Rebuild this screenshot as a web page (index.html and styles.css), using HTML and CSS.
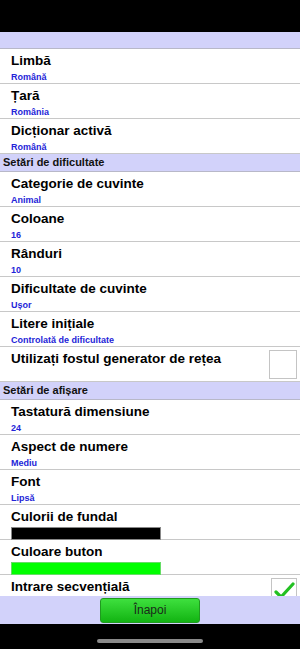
FILE: index.html
```html
<!DOCTYPE html>
<html lang="ro">
<head>
    <meta charset="UTF-8">
    <link rel="stylesheet" href="styles.css">
</head>
<body>
    <div class="screen">
        <div class="status-bar"></div>
        <div class="top-bar"></div>

        <div class="settings">
            <div class="row">
                <div class="row-text">
                    <div class="row-title">Limbă</div>
                    <div class="row-value">Română</div>
                </div>
            </div>
            <div class="row">
                <div class="row-text">
                    <div class="row-title">Țară</div>
                    <div class="row-value">România</div>
                </div>
            </div>
            <div class="row">
                <div class="row-text">
                    <div class="row-title">Dicționar activă</div>
                    <div class="row-value">Română</div>
                </div>
            </div>

            <div class="section-header">Setări de dificultate</div>

            <div class="row">
                <div class="row-text">
                    <div class="row-title">Categorie de cuvinte</div>
                    <div class="row-value">Animal</div>
                </div>
            </div>
            <div class="row">
                <div class="row-text">
                    <div class="row-title">Coloane</div>
                    <div class="row-value">16</div>
                </div>
            </div>
            <div class="row">
                <div class="row-text">
                    <div class="row-title">Rânduri</div>
                    <div class="row-value">10</div>
                </div>
            </div>
            <div class="row">
                <div class="row-text">
                    <div class="row-title">Dificultate de cuvinte</div>
                    <div class="row-value">Ușor</div>
                </div>
            </div>
            <div class="row">
                <div class="row-text">
                    <div class="row-title">Litere inițiale</div>
                    <div class="row-value">Controlată de dificultate</div>
                </div>
            </div>
            <div class="row">
                <div class="row-text">
                    <div class="row-title">Utilizați fostul generator de rețea</div>
                </div>
                <div class="checkbox"></div>
            </div>

            <div class="section-header">Setări de afișare</div>

            <div class="row">
                <div class="row-text">
                    <div class="row-title">Tastatură dimensiune</div>
                    <div class="row-value">24</div>
                </div>
            </div>
            <div class="row">
                <div class="row-text">
                    <div class="row-title">Aspect de numere</div>
                    <div class="row-value">Mediu</div>
                </div>
            </div>
            <div class="row">
                <div class="row-text">
                    <div class="row-title">Font</div>
                    <div class="row-value">Lipsă</div>
                </div>
            </div>
            <div class="row">
                <div class="row-text">
                    <div class="row-title">Culorii de fundal</div>
                    <div class="color-swatch swatch-black"></div>
                </div>
            </div>
            <div class="row">
                <div class="row-text">
                    <div class="row-title">Culoare buton</div>
                    <div class="color-swatch swatch-green"></div>
                </div>
            </div>
            <div class="row">
                <div class="row-text">
                    <div class="row-title">Intrare secvențială</div>
                </div>
                <div class="checkbox checked">
                    <svg width="24" height="24" viewBox="0 0 24 24">
                        <path d="M4 12 L9 17 L21 4" fill="none" stroke="#22c022" stroke-width="3.2" stroke-linecap="round" stroke-linejoin="round"/>
                    </svg>
                </div>
            </div>
        </div>

        <div class="bottom-bar">
            <button class="back-button">Înapoi</button>
        </div>
        <div class="home-area">
            <div class="home-indicator"></div>
        </div>
    </div>
</body>
</html>
```

FILE: styles.css
```css
body {
    margin: 0;
    font-family: 'Liberation Sans', Arial, sans-serif;
    background: #000;
}

.screen {
    width: 300px;
    height: 649px;
    display: flex;
    flex-direction: column;
    overflow: hidden;
}

.status-bar {
    height: 32px;
    background: #000;
    flex-shrink: 0;
}

.top-bar {
    height: 16px;
    background: #d2d2fa;
    border-bottom: 1px solid #b8b8c8;
    flex-shrink: 0;
}

.settings {
    flex: 1;
    overflow: hidden;
    background: #fff;
}

.row {
    height: 34px;
    border-bottom: 1px solid #c8c8c8;
    display: flex;
    justify-content: space-between;
    padding: 0 3px 0 11px;
    background: #fff;
}

.row-text {
    padding-top: 3px;
}

.row-title {
    font-size: 13.5px;
    font-weight: bold;
    line-height: 17px;
    color: #000;
}

.row-value {
    font-size: 9px;
    font-weight: bold;
    line-height: 12px;
    margin-top: 2px;
    color: #2424d8;
}

.color-swatch {
    width: 148px;
    height: 11px;
    margin-top: 2px;
    border: 1px solid #888;
}

.swatch-black {
    background: #000;
}

.swatch-green {
    background: #00ff00;
    border-color: #66dd66;
}

.checkbox {
    width: 26px;
    height: 27px;
    margin-top: 3px;
    border: 1px solid #c4c4c4;
    background: #fff;
    display: flex;
    align-items: center;
    justify-content: center;
}

.checkbox.checked {
    align-items: flex-start;
    padding-top: 1px;
    box-sizing: border-box;
    height: 28px;
}

.section-header {
    height: 17px;
    line-height: 17px;
    border-bottom: 1px solid #b8b8c8;
    background: #d2d2fa;
    padding-left: 3px;
    font-size: 11px;
    font-weight: bold;
    color: #111;
}

.bottom-bar {
    height: 28px;
    background: #d2d2fa;
    display: flex;
    justify-content: center;
    align-items: center;
    flex-shrink: 0;
}

.back-button {
    width: 100px;
    height: 25px;
    border: 1px solid #1f9a1f;
    border-radius: 3px;
    background: linear-gradient(#3ee03e, #12b412);
    font-family: 'Liberation Sans', Arial, sans-serif;
    font-size: 12px;
    color: #1a2a1a;
    padding: 0;
}

.home-area {
    height: 25px;
    background: #000;
    display: flex;
    justify-content: center;
    padding-top: 15px;
    box-sizing: border-box;
    flex-shrink: 0;
}

.home-indicator {
    width: 106px;
    height: 4px;
    border-radius: 2px;
    background: #8a8a8a;
}
```
